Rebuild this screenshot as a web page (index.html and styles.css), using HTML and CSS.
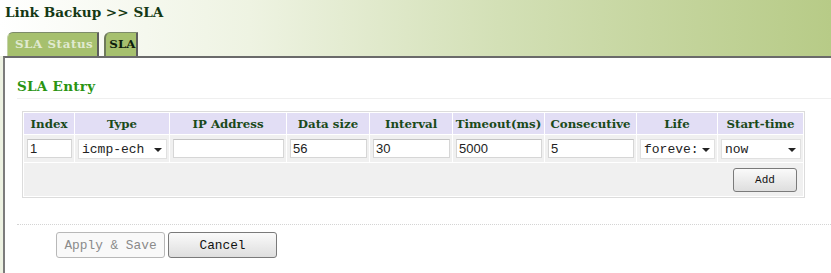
FILE: index.html
```html
<html>
  <head>
    <meta charset="utf-8">
    <link rel="stylesheet" href="styles.css">
  </head>
  <body>
    <div class="topBar">
      <div class="pageTitle">Link Backup &gt;&gt; SLA</div>
      <ul class="tabs">
        <li><a>SLA Status</a></li>
        <li class="activeTab"><a>SLA</a></li>
      </ul>
    </div>
    <div class="mainPanel">
      <div class="sectionTitle">SLA Entry</div>
      <table class="slaTable">
        <colgroup>
          <col class="cIndex"><col class="cType"><col class="cIp"><col class="cData">
          <col class="cInterval"><col class="cTimeout"><col class="cConsec">
          <col class="cLife"><col class="cStart">
        </colgroup>
        <tr class="headRow">
          <th>Index</th>
          <th>Type</th>
          <th>IP Address</th>
          <th>Data size</th>
          <th>Interval</th>
          <th>Timeout(ms)</th>
          <th>Consecutive</th>
          <th>Life</th>
          <th>Start-time</th>
        </tr>
        <tr class="inputRow">
          <td><input class="field" type="text" value="1"></td>
          <td><span class="pick">icmp-ech</span></td>
          <td><input class="field" type="text" value=""></td>
          <td><input class="field" type="text" value="56"></td>
          <td><input class="field" type="text" value="30"></td>
          <td><input class="field" type="text" value="5000"></td>
          <td><input class="field" type="text" value="5"></td>
          <td><span class="pick">foreve:</span></td>
          <td><span class="pick">now</span></td>
        </tr>
        <tr class="addRow">
          <td colspan="9"><button class="btn addBtn">Add</button></td>
        </tr>
      </table>
      <div class="divider"></div>
      <div class="actions">
        <button class="btn wideBtn" disabled>Apply &amp; Save</button>
        <button class="btn wideBtn">Cancel</button>
      </div>
    </div>
  </body>
</html>
```

FILE: styles.css
```css
body {
  margin: 0;
  background-color: #edf2e2;
  font-family: "Liberation Mono", monospace;
  overflow: hidden;
}

.topBar {
  display: flex;
  flex-direction: column;
  height: 56px;
  background: linear-gradient(to right, #ffffff 0%, #eef3e2 30%, #d3e0b6 60%, #c6d6a0 78%, #b7cb87 100%);
}

.pageTitle {
  margin: 4px 0 0 5px;
  font-family: "DejaVu Serif", serif;
  font-size: 13.6px;
  font-weight: bold;
  line-height: 16px;
  color: #143814;
}

ul.tabs {
  display: flex;
  gap: 5px;
  margin: auto 0 0 7px;
  padding: 0;
  list-style: none;
}

ul.tabs > li {
  height: 23px;
  padding: 0 4px 0 7px;
  background-color: #a6c06e;
  border-top: 1px solid #7d8b6a;
  border-left: 1px solid #c4d3a8;
  border-right: 2px solid #5d5d5d;
  border-top-left-radius: 6px;
  font-family: "DejaVu Serif", serif;
  font-size: 11.8px;
  font-weight: bold;
  letter-spacing: 0.6px;
  line-height: 23px;
  color: #e0ead0;
}

ul.tabs > li.activeTab {
  padding: 0 1px 0 3px;
  border-left: 2px solid #6e7a5a;
  letter-spacing: 0;
  color: #0c1c0c;
}

.mainPanel {
  height: 215px;
  margin-left: 3px;
  padding-left: 12px;
  background-color: #ffffff;
  border-top: 2px solid #6a6a6a;
  border-left: 2px solid #7c7c7c;
}

.sectionTitle {
  padding: 20px 0 4px 0;
  font-family: "DejaVu Serif", serif;
  font-size: 13.5px;
  font-weight: bold;
  letter-spacing: 0.3px;
  line-height: 16px;
  color: #2a9412;
  border-bottom: 1px solid #efefef;
}

.slaTable {
  width: 783px;
  margin: 12px 0 0 5px;
  table-layout: fixed;
  border-collapse: separate;
  border-spacing: 1px;
  border: 1px solid #dcdcdc;
  background-color: #ffffff;
}

.cIndex { width: 50px; }
.cType { width: 94px; }
.cIp { width: 116px; }
.cData { width: 82px; }
.cInterval { width: 82px; }
.cTimeout { width: 91px; }
.cConsec { width: 91px; }
.cLife { width: 80px; }
.cStart { width: 85px; }

.slaTable th,
.slaTable td {
  padding: 0;
}

.headRow th {
  height: 21px;
  background-color: #e2def5;
  font-family: "DejaVu Serif", serif;
  font-size: 11.8px;
  font-weight: bold;
  color: #1a4a1a;
  text-align: center;
  white-space: nowrap;
}

.inputRow td {
  height: 27px;
  padding: 0 2px 0 3px;
  background-color: #f0f0f0;
}

.field {
  display: block;
  box-sizing: border-box;
  width: 100%;
  height: 19px;
  padding: 0 2px;
  background-color: #ffffff;
  border: 1px solid #d6d6d6;
  border-top-color: #c4c4c4;
  font-family: "Liberation Sans", Arial, sans-serif;
  font-size: 13px;
  color: #222;
  outline: none;
}

.pick {
  display: block;
  position: relative;
  box-sizing: border-box;
  height: 20px;
  padding-left: 3px;
  background-color: #ffffff;
  border: 1px solid #e0e0e0;
  font-size: 13px;
  line-height: 19px;
  color: #222;
}

.pick::after {
  content: "";
  position: absolute;
  right: 4px;
  top: 8px;
  border-left: 4px solid transparent;
  border-right: 4px solid transparent;
  border-top: 4px solid #222;
}

.addRow td {
  height: 33px;
  padding-right: 6px;
  background-color: #f0f0f0;
  text-align: right;
}

.btn {
  box-sizing: border-box;
  background: linear-gradient(to bottom, #fafafa, #dedede);
  border: 1px solid #7a7a7a;
  border-radius: 3px;
  font-family: "Liberation Mono", monospace;
  color: #111;
}

.addBtn {
  width: 64px;
  height: 24px;
  font-size: 11px;
}

.divider {
  margin-top: 26px;
  border-top: 1px dotted #d4d4d4;
}

.actions {
  display: flex;
  gap: 3px;
  margin: 7px 0 0 39px;
}

.wideBtn {
  width: 109px;
  height: 26px;
  font-size: 12.8px;
}

.wideBtn:disabled {
  background: #f9f9f9;
  border-color: #b8b8b8;
  color: #8a8a8a;
}
```
